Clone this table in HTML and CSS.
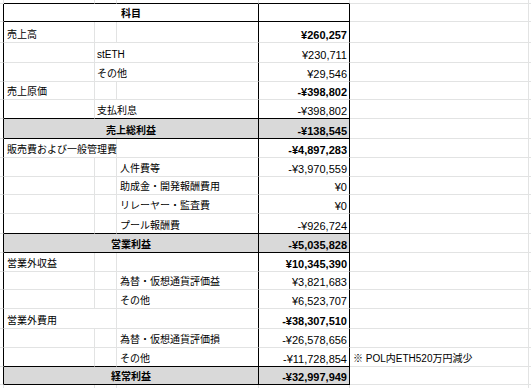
FILE: index.html
```html
<!DOCTYPE html>
<html lang="ja">
<head>
<meta charset="utf-8">
<title>損益計算書</title>
<link rel="stylesheet" href="styles.css">
</head>
<body>
<div class="sheet">
  <div class="row edge-top">
    <div class="c g"></div><div class="c t"></div><div class="c t"></div><div class="c t"></div><div class="c t"></div><div class="c"></div><div class="c"></div>
  </div>
  <div class="row h18 kb">
    <div class="c g"></div>
    <div class="c t abc center bold">科目</div>
    <div class="c t num"></div>
    <div class="c"></div><div class="c"></div>
  </div>
  <div class="row h21">
    <div class="c g"></div>
    <div class="c t">売上高</div><div class="c t"></div><div class="c t cend"></div>
    <div class="c t num bold">¥260,257</div>
    <div class="c"></div><div class="c"></div>
  </div>
  <div class="row h20">
    <div class="c g"></div>
    <div class="c t"></div><div class="c t bc">stETH</div>
    <div class="c t num">¥230,711</div>
    <div class="c"></div><div class="c"></div>
  </div>
  <div class="row">
    <div class="c g"></div>
    <div class="c t"></div><div class="c t bc">その他</div>
    <div class="c t num">¥29,546</div>
    <div class="c"></div><div class="c"></div>
  </div>
  <div class="row h18">
    <div class="c g"></div>
    <div class="c t">売上原価</div><div class="c t"></div><div class="c t cend"></div>
    <div class="c t num bold">-¥398,802</div>
    <div class="c"></div><div class="c"></div>
  </div>
  <div class="row kb">
    <div class="c g"></div>
    <div class="c t"></div><div class="c t bc">支払利息</div>
    <div class="c t num">-¥398,802</div>
    <div class="c"></div><div class="c"></div>
  </div>
  <div class="row h20 kb total">
    <div class="c g"></div>
    <div class="c t abc center bold">売上総利益</div>
    <div class="c t num bold">-¥138,545</div>
    <div class="c"></div><div class="c"></div>
  </div>
  <div class="row">
    <div class="c g"></div>
    <div class="c t ab">販売費および一般管理費</div><div class="c t cend"></div>
    <div class="c t num bold">-¥4,897,283</div>
    <div class="c"></div><div class="c"></div>
  </div>
  <div class="row">
    <div class="c g"></div>
    <div class="c t"></div><div class="c t"></div><div class="c t cend">人件費等</div>
    <div class="c t num">-¥3,970,559</div>
    <div class="c"></div><div class="c"></div>
  </div>
  <div class="row h18">
    <div class="c g"></div>
    <div class="c t"></div><div class="c t"></div><div class="c t cend">助成金・開発報酬費用</div>
    <div class="c t num">¥0</div>
    <div class="c"></div><div class="c"></div>
  </div>
  <div class="row">
    <div class="c g"></div>
    <div class="c t"></div><div class="c t"></div><div class="c t cend">リレーヤー・監査費</div>
    <div class="c t num">¥0</div>
    <div class="c"></div><div class="c"></div>
  </div>
  <div class="row h20 kb">
    <div class="c g"></div>
    <div class="c t"></div><div class="c t"></div><div class="c t cend">プール報酬費</div>
    <div class="c t num">-¥926,724</div>
    <div class="c"></div><div class="c"></div>
  </div>
  <div class="row kb total">
    <div class="c g"></div>
    <div class="c t abc center bold">営業利益</div>
    <div class="c t num bold">-¥5,035,828</div>
    <div class="c"></div><div class="c"></div>
  </div>
  <div class="row">
    <div class="c g"></div>
    <div class="c t">営業外収益</div><div class="c t"></div><div class="c t cend"></div>
    <div class="c t num bold">¥10,345,390</div>
    <div class="c"></div><div class="c"></div>
  </div>
  <div class="row h18">
    <div class="c g"></div>
    <div class="c t"></div><div class="c t"></div><div class="c t cend">為替・仮想通貨評価益</div>
    <div class="c t num">¥3,821,683</div>
    <div class="c"></div><div class="c"></div>
  </div>
  <div class="row">
    <div class="c g"></div>
    <div class="c t"></div><div class="c t"></div><div class="c t cend">その他</div>
    <div class="c t num">¥6,523,707</div>
    <div class="c"></div><div class="c"></div>
  </div>
  <div class="row h20">
    <div class="c g"></div>
    <div class="c t ab">営業外費用</div><div class="c t cend"></div>
    <div class="c t num bold">-¥38,307,510</div>
    <div class="c"></div><div class="c"></div>
  </div>
  <div class="row">
    <div class="c g"></div>
    <div class="c t"></div><div class="c t"></div><div class="c t cend">為替・仮想通貨評価損</div>
    <div class="c t num">-¥26,578,656</div>
    <div class="c"></div><div class="c"></div>
  </div>
  <div class="row kb">
    <div class="c g"></div>
    <div class="c t"></div><div class="c t"></div><div class="c t cend">その他</div>
    <div class="c t num">-¥11,728,854</div>
    <div class="c note">※ POL内ETH520万円減少</div><div class="c"></div>
  </div>
  <div class="row h18 kb total">
    <div class="c g"></div>
    <div class="c t abc center bold">経常利益</div>
    <div class="c t num bold">-¥32,997,949</div>
    <div class="c"></div><div class="c"></div>
  </div>
  <div class="row edge-bottom">
    <div class="c g"></div><div class="c"></div><div class="c"></div><div class="c"></div><div class="c"></div><div class="c"></div><div class="c"></div>
  </div>
</div>
</body>
</html>
```

FILE: styles.css
```css
html, body {
  margin: 0;
  padding: 0;
  background: #ffffff;
  overflow: hidden;
}

body {
  font-family: "Liberation Sans", Arial, "Noto Sans CJK JP", sans-serif;
  font-size: 10px;
  color: #000000;
}

.sheet {
  width: 531px;
  height: 388px;
  overflow: hidden;
}

.row {
  display: grid;
  grid-template-columns: 4px 91px 22px 142px 91px 179px 1fr;
  height: 19px;
}

.row.h18 { height: 18px; }
.row.h20 { height: 20px; }
.row.h21 { height: 21px; }
.row.edge-top { height: 4px; }
.row.edge-bottom { height: 3px; }

.c {
  box-sizing: border-box;
  border-right: 1px solid #e2e3e3;
  border-bottom: 1px solid #e2e3e3;
  display: flex;
  align-items: flex-end;
  padding: 0 3px 1px 3px;
  line-height: 12px;
  white-space: nowrap;
  min-width: 0;
}

.row > .c:last-child {
  border-right: 0;
  padding: 0;
}

.edge-bottom .c {
  border-bottom: 0;
  padding: 0;
}

.c.g {
  padding: 0;
  border-right-color: #000000;
}

.edge-top .c.g,
.edge-bottom .c.g {
  border-right-color: #e2e3e3;
}

.edge-top .c.t,
.kb .c.t {
  border-bottom-color: #000000;
}

.c.abc { grid-column: span 3; border-right-color: #000000; }
.c.bc { grid-column: span 2; border-right-color: #000000; padding-left: 2px; }
.c.ab { grid-column: span 2; }
.c.cend { border-right-color: #000000; }

.c.num {
  justify-content: flex-end;
  border-right-color: #000000;
  padding-right: 2px;
  font-size: 11px;
}

.c.center { justify-content: center; }
.bold { font-weight: bold; }

.total .c.t { background: #d9d9d9; }

.c.note { padding-left: 3px; }
```
